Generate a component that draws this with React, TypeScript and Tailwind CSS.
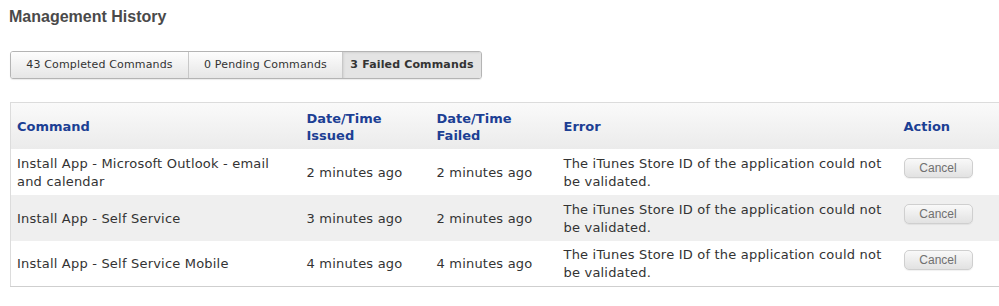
import React from 'react';

const rows = [
  { command: ['Install App - Microsoft Outlook - email', 'and calendar'], issued: '2 minutes ago', failed: '2 minutes ago' },
  { command: ['Install App - Self Service'], issued: '3 minutes ago', failed: '2 minutes ago' },
  { command: ['Install App - Self Service Mobile'], issued: '4 minutes ago', failed: '4 minutes ago' },
];

const tabs = [
  { label: '43 Completed Commands', active: false },
  { label: '0 Pending Commands', active: false },
  { label: '3 Failed Commands', active: true },
];

export default function App() {
  return (
    <div className="h-[306px] w-[999px] overflow-hidden bg-white font-['DejaVu_Sans',Verdana,sans-serif] text-[13px] text-[#333]">
      <h1 className="pl-[9px] pt-[7px] font-['Liberation_Sans',Arial,sans-serif] text-[16px] font-bold leading-[20px] text-[#4a4a4a]">
        Management History
      </h1>

      <div className="ml-[10px] mt-[24px] flex w-[472px] overflow-hidden rounded-[3px] border border-[#b4b4b4] shadow-[0_1px_1px_rgba(0,0,0,0.08)]">
        {tabs.map((tab, i) => (
          <button
            key={tab.label}
            className={`flex h-[26px] items-center justify-center text-[11px] tracking-[0.15px] text-[#333] ${
              i === 0 ? 'w-[177px]' : i === 1 ? 'w-[154px] border-l border-[#c8c8c8]' : 'flex-1 border-l border-[#c8c8c8]'
            } ${
              tab.active
                ? 'bg-[#e4e4e4] font-bold shadow-[inset_1px_1px_2px_rgba(0,0,0,0.08)]'
                : 'bg-gradient-to-b from-[#fdfdfd] to-[#e6e6e6]'
            }`}
          >
            {tab.label}
          </button>
        ))}
      </div>

      <table className="ml-[10px] mt-[23px] w-[989px] table-fixed border-collapse border-l border-t border-b border-l-[#dcdcdc] border-t-[#dcdcdc] border-b-[#cfcfcf]">
        <colgroup>
          <col className="w-[290px]" />
          <col className="w-[130px]" />
          <col className="w-[127px]" />
          <col className="w-[340px]" />
          <col className="w-[102px]" />
        </colgroup>
        <thead>
          <tr className="h-[46px] bg-gradient-to-b from-[#fafafa] to-[#ebebeb] text-left text-[13px] font-bold leading-[17px] text-[#1c3f94]">
            <th className="px-[6px] pt-[2px]">Command</th>
            <th className="px-[6px] pt-[2px]">Date/Time<br />Issued</th>
            <th className="px-[6px] pt-[2px]">Date/Time<br />Failed</th>
            <th className="px-[6px] pt-[2px]">Error</th>
            <th className="px-[6px] pt-[2px]">Action</th>
          </tr>
        </thead>
        <tbody>
          {rows.map((row, i) => (
            <tr key={i} className={`h-[46px] leading-[18px] tracking-[0.2px] ${i === 1 ? 'bg-[#efefef]' : 'bg-white'}`}>
              <td className="px-[6px] pt-[2px]">
                {row.command.map((line, j) => (
                  <React.Fragment key={j}>
                    {j > 0 && <br />}
                    {line}
                  </React.Fragment>
                ))}
              </td>
              <td className="px-[6px] pt-[2px]">{row.issued}</td>
              <td className="px-[6px] pt-[2px]">{row.failed}</td>
              <td className="px-[6px] pt-[2px]">
                The iTunes Store ID of the application could not<br />be validated.
              </td>
              <td className="px-[6px]">
                <button className="-mt-[7px] flex h-[20px] w-[69px] items-center justify-center rounded-[5px] border border-[#cfcfcf] bg-gradient-to-b from-[#f9f9f9] to-[#e2e2e2] font-['Liberation_Sans',Arial,sans-serif] text-[12px] tracking-normal text-[#707070] shadow-[0_1px_1px_rgba(0,0,0,0.06)]">
                  Cancel
                </button>
              </td>
            </tr>
          ))}
        </tbody>
      </table>
    </div>
  );
}
